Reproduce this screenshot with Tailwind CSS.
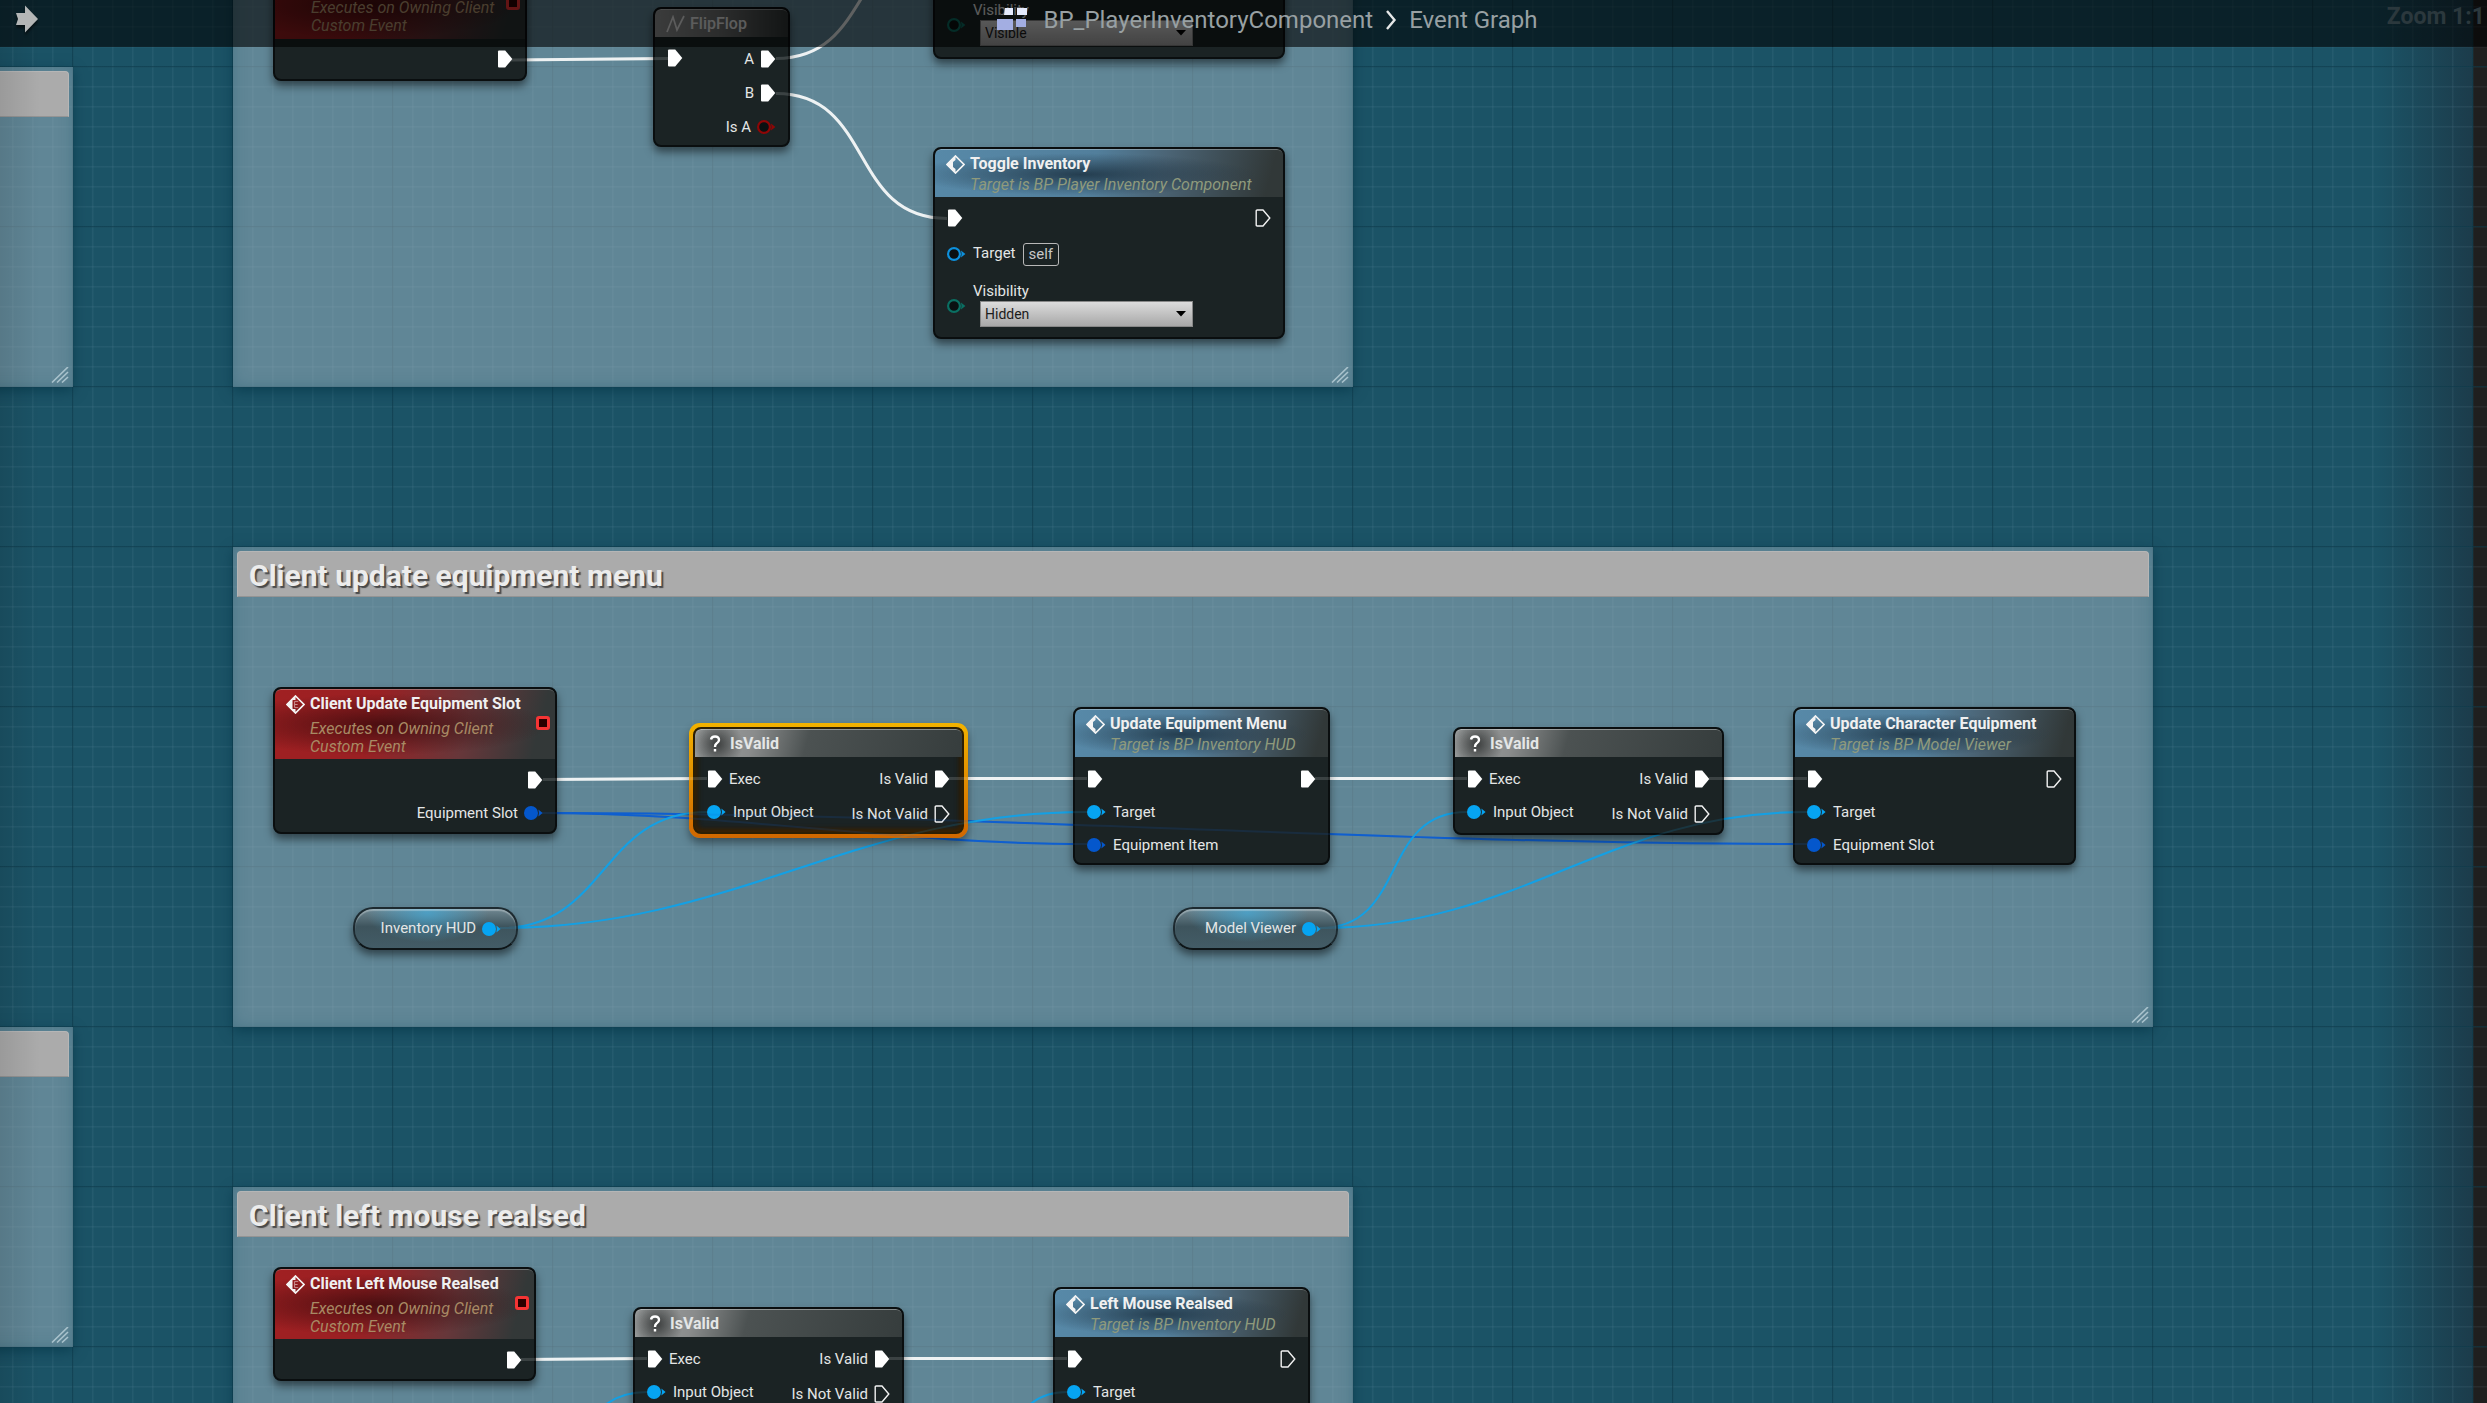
<!DOCTYPE html>
<html lang="en">
<head>
<meta charset="utf-8">
<title>BP_PlayerInventoryComponent - Event Graph</title>
<script src="https://cdn.jsdelivr.net/npm/@tailwindcss/browser@4"></script>
</head>
<body class="bg-[#1b5366] font-['Roboto',sans-serif] text-[15px] text-[#e4e6e6]">

<!-- shared glyphs -->
<svg class="hidden" aria-hidden="true">
  <defs>
    <symbol id="exec-on" viewBox="0 0 16 18"><path d="M1 1.5Q1 .5 2 .5H8.2L15.3 9 8.2 17.5H2Q1 17.5 1 16.5Z" fill="#fff"/></symbol>
    <symbol id="exec-off" viewBox="0 0 16 18"><path d="M1.2 2Q1.2 1 2.2 1H8L14.8 9 8 17H2.2Q1.2 17 1.2 16Z" fill="none" stroke="#f2f2f2" stroke-width="1.4"/></symbol>
    <symbol id="pin-on" viewBox="0 0 19 14"><circle cx="7" cy="7" r="7" fill="currentColor"/><path d="M14.4 3.4 18.6 7 14.4 10.6Q15.4 7 14.4 3.4Z" fill="currentColor"/></symbol>
    <symbol id="pin-off" viewBox="0 0 19 14"><circle cx="7" cy="7" r="5.9" fill="#0a1011" stroke="currentColor" stroke-width="2.2"/><path d="M14 3.4 18.4 7 14 10.6Q15 7 14 3.4Z" fill="currentColor"/></symbol>
    <symbol id="diamond" viewBox="0 0 19 19"><path d="M9.5 1 18 9.5 9.5 18 1 9.5Z" fill="none" stroke="#f4f4f4" stroke-width="1.7"/><path d="M9.5 1V5L7 7V12L9.5 14V18L1 9.5Z" fill="#f4f4f4"/></symbol>
    <symbol id="diamond-event" viewBox="0 0 19 19"><path d="M9.5 1 18 9.5 9.5 18 1 9.5Z" fill="none" stroke="#f4f4f4" stroke-width="1.7"/><path d="M9.5 1V5H6.5V14H9.5V18L1 9.5Z" fill="#f4f4f4"/><path d="M12.2 6.4H8.6V12.6H12.2M8.6 9.5H11.6" fill="none" stroke="#c98f8f" stroke-width="1"/></symbol>
    <symbol id="grip" viewBox="0 0 18 16"><path d="M1 15.5 17 0M6 15.5 17 5M11 15.5 17 10" fill="none" stroke="#a9c2cc" stroke-width="1.6"/></symbol>
    <symbol id="caret" viewBox="0 0 10 6"><path d="M0 0H10L5 5.6Z" fill="#000"/></symbol>
  </defs>
</svg>

<main class="relative min-h-screen w-full overflow-hidden bg-[#1b5366]">
  <!-- canvas edges and grid -->
  <div class="absolute inset-y-0 right-[14px] w-24 bg-linear-to-r from-[#1f3541]/0 to-[#1c3644]/80"></div>
  <div class="absolute inset-y-0 right-0 w-[14px] bg-[#1f1f1f]"></div>
  <div class="absolute inset-0 bg-[linear-gradient(to_right,rgba(150,190,205,.08)_0_1px,rgba(150,190,205,.04)_1px_2px,transparent_2px),linear-gradient(to_bottom,rgba(150,190,205,.08)_0_1px,rgba(150,190,205,.04)_1px_2px,transparent_2px)] bg-[size:20px_20px] bg-[position:12px_6px]"></div>
  <div class="absolute inset-0 bg-[linear-gradient(to_right,rgba(5,50,66,.55)_0_1px,rgba(5,50,66,.2)_1px_2px,transparent_2px),linear-gradient(to_bottom,rgba(5,50,66,.55)_0_1px,rgba(5,50,66,.2)_1px_2px,transparent_2px)] bg-[size:160px_160px] bg-[position:72px_66px]"></div>

  <!-- comment boxes -->
  <section class="absolute -left-40 top-[67px] flex h-80 w-[233px] flex-col justify-between bg-[#a5bac5]/50 p-1 shadow-[inset_0_0_14px_rgba(40,95,115,.4),0_4px_12px_rgba(0,50,68,.6)]">
    <div class="h-[46px] rounded-t-sm border border-[#b6b6b6] border-b-[#949494] bg-[#ababab]"></div>
    <svg class="h-4 w-[18px] self-end" aria-hidden="true"><use href="#grip"/></svg>
  </section>
  <section class="absolute -left-40 top-[1027px] flex h-80 w-[233px] flex-col justify-between bg-[#a5bac5]/50 p-1 shadow-[inset_0_0_14px_rgba(40,95,115,.4),0_4px_12px_rgba(0,50,68,.6)]">
    <div class="h-[46px] rounded-t-sm border border-[#b6b6b6] border-b-[#949494] bg-[#ababab]"></div>
    <svg class="h-4 w-[18px] self-end" aria-hidden="true"><use href="#grip"/></svg>
  </section>
  <section class="absolute -top-64 left-[233px] flex h-[643px] w-[1120px] flex-col justify-end bg-[#a5bac5]/50 p-1 shadow-[inset_0_0_14px_rgba(40,95,115,.4),0_4px_12px_rgba(0,50,68,.6)]">
    <svg class="h-4 w-[18px] self-end" aria-hidden="true"><use href="#grip"/></svg>
  </section>
  <section class="absolute left-[233px] top-[547px] flex h-[480px] w-[1920px] flex-col justify-between bg-[#a5bac5]/50 p-1 shadow-[inset_0_0_14px_rgba(40,95,115,.4),0_4px_12px_rgba(0,50,68,.6)]">
    <h2 class="h-[46px] rounded-t-sm border border-[#b6b6b6] border-b-[#949494] bg-[#ababab] px-[11px] text-3xl leading-[48px] font-bold text-[#ececec] [text-shadow:2px_2px_1px_rgba(40,40,40,.75)]">Client update equipment menu</h2>
    <svg class="h-4 w-[18px] self-end" aria-hidden="true"><use href="#grip"/></svg>
  </section>
  <section class="absolute left-[233px] top-[1187px] flex h-[480px] w-[1120px] flex-col justify-between bg-[#a5bac5]/50 p-1 shadow-[inset_0_0_14px_rgba(40,95,115,.4),0_4px_12px_rgba(0,50,68,.6)]">
    <h2 class="h-[46px] rounded-t-sm border border-[#b6b6b6] border-b-[#949494] bg-[#ababab] px-[11px] text-3xl leading-[48px] font-bold text-[#ececec] [text-shadow:2px_2px_1px_rgba(40,40,40,.75)]">Client left mouse realsed</h2>
    <svg class="h-4 w-[18px] self-end" aria-hidden="true"><use href="#grip"/></svg>
  </section>
  <div class="absolute inset-y-0 left-0 w-10 bg-linear-to-r from-black/10 to-transparent"></div>

  <!-- wires -->
  <svg class="absolute inset-0 h-full w-full" fill="none" aria-hidden="true">
    <g id="wires">
      <g stroke="#0f5fcf" stroke-width="2">
        <path d="M542 813C734 813 895 844 1087 844"/>
        <path d="M542 813C974 813 1375 844 1807 844"/>
      </g>
      <g stroke="#14a0e4" stroke-width="2">
        <path d="M500 928C608 928 599 812 707 812"/>
        <path d="M500 928C734 928 853 812 1087 812"/>
        <path d="M1320 928C1408 928 1379 812 1467 812"/>
        <path d="M1320 928C1521 928 1606 812 1807 812"/>
        <path d="M500 1508C588 1508 559 1392 647 1392"/>
        <path d="M940 1508C1021 1508 986 1392 1067 1392"/>
      </g>
      <g stroke="#eef2f3" stroke-width="3">
        <path d="M511 60L668 58.500"/>
        <path d="M776 58.500C873 58.500 850 -62 947 -62"/>
        <path d="M776 93.500C875 93.500 848 218.500 947 218.500"/>
        <path d="M543 779.500L707 778.500"/>
        <path d="M949 778.500H1087M1315 778.500H1467M1709 778.500H1807"/>
        <path d="M521 1359.500L647 1358.500M889 1358.500H1067"/>
      </g>
    </g>
  </svg>

  <!-- ===== toggle inventory graph ===== -->
  <article class="absolute -top-[33px] left-[273px] h-[114px] w-[254px] overflow-hidden rounded-lg border-2 border-[#0a0e0f] bg-[#1b2324] shadow-[0_5px_8px_rgba(0,0,0,.5)]">
    <header class="relative h-[70px] bg-[radial-gradient(ellipse_60%_50%_at_38%_50%,rgba(50,8,10,.75),transparent),linear-gradient(105deg,#9c1c1e_0%,#8c1c1f_35%,#5a2d30_65%,#2b3333_92%)] pl-9 pt-[30px] text-base text-[#b89a74] italic leading-[18px]">
      <p>Executes on Owning Client<br>Custom Event</p>
      <i class="absolute right-[5px] top-[27px] h-[14px] w-[14px] rounded-[3px] border-3 border-[#f53434] bg-[#2a0000]"></i>
    </header>
    <div class="flex justify-end px-3 pt-[11px]"><svg class="h-[18px] w-4"><use href="#exec-on"/></svg></div>
  </article>

  <article class="absolute left-[653px] top-[7px] h-[140px] w-[137px] overflow-hidden rounded-lg border-2 border-[#0a0e0f] bg-[#1b2324] shadow-[0_5px_8px_rgba(0,0,0,.5)]">
    <header class="flex h-7 items-center gap-1 rounded-t-md border-t border-white/40 bg-linear-to-r from-[#949696] via-[#6c6e6e] to-[#303636] pl-[11px] text-base font-medium text-[#e6e6e6]">
      <svg class="h-[18px] w-5" viewBox="0 0 20 18" fill="none" stroke="#e6e6e6" stroke-width="1.700"><path d="M1 17 7 2 11 15 18 1"/></svg>
      <h3>FlipFlop</h3>
    </header>
    <div class="flex items-start justify-between px-3 pt-3">
      <svg class="h-[18px] w-4"><use href="#exec-on"/></svg>
      <ul class="flex flex-col gap-[14px] leading-5">
        <li class="flex items-center justify-end gap-1.5">A<svg class="h-[18px] w-4"><use href="#exec-on"/></svg></li>
        <li class="flex items-center justify-end gap-1.5">B<svg class="h-[18px] w-4"><use href="#exec-on"/></svg></li>
        <li class="flex items-center justify-end gap-1.5">Is A<svg class="h-[14px] w-[19px] text-[#8e0606]"><use href="#pin-off"/></svg></li>
      </ul>
    </div>
  </article>

  <article class="absolute -top-[133px] left-[933px] h-[192px] w-[352px] overflow-hidden rounded-lg border-2 border-[#0a0e0f] bg-[#1b2324] shadow-[0_5px_8px_rgba(0,0,0,.5)]">
    <div class="flex items-start gap-[7px] pl-3 pt-[131px]">
      <svg class="mt-[18px] h-[14px] w-[19px] text-[#0a6f62]"><use href="#pin-off"/></svg>
      <div class="flex flex-col leading-5">
        <label for="vis-a">Visibility</label>
        <span class="relative ml-[7px] flex">
          <select id="vis-a" class="h-[26px] w-[213px] appearance-none border border-[#888] bg-linear-to-b from-[#dcdcdc] to-[#a8a8a8] pl-1 text-sm text-[#1c1c1c]"><option>Visible</option><option>Hidden</option></select>
          <svg class="absolute right-[7px] top-[10px] h-[6px] w-[10px]"><use href="#caret"/></svg>
        </span>
      </div>
    </div>
  </article>

  <article class="absolute left-[933px] top-[147px] h-[192px] w-[352px] overflow-hidden rounded-lg border-2 border-[#0a0e0f] bg-[#1b2324] shadow-[0_5px_8px_rgba(0,0,0,.5)]">
    <header class="h-12 rounded-t-md border-t border-white/30 bg-[radial-gradient(ellipse_50%_45%_at_42%_52%,rgba(25,45,60,.8),transparent),linear-gradient(105deg,#5789a8_0%,#527f9c_45%,#4b6475_65%,#313838_95%)] pl-[11px] pt-[3px] text-base">
      <h3 class="flex items-center gap-[5px] font-bold leading-[22px] text-[#f0f0f0]"><svg class="h-[19px] w-[19px]"><use href="#diamond"/></svg>Toggle Inventory</h3>
      <p class="pl-6 leading-5 text-[#8f9a7c] italic">Target is BP Player Inventory Component</p>
    </header>
    <div class="flex justify-between px-3 pt-3"><svg class="h-[18px] w-4"><use href="#exec-on"/></svg><svg class="h-[18px] w-4"><use href="#exec-off"/></svg></div>
    <p class="flex items-center gap-[7px] pl-3 pt-[14px] leading-6"><svg class="h-[14px] w-[19px] text-[#0d90dc]"><use href="#pin-off"/></svg><span class="pb-0.5">Target</span><span class="h-[23px] rounded-[3px] border border-[#b8b8b8] px-[5px] leading-5 text-[#c8c8c8]">self</span></p>
    <div class="flex items-start gap-[7px] pl-3 pt-[14px]">
      <svg class="mt-[18px] h-[14px] w-[19px] text-[#0a6f62]"><use href="#pin-off"/></svg>
      <div class="flex flex-col leading-5">
        <label for="vis-b">Visibility</label>
        <span class="relative ml-[7px] flex">
          <select id="vis-b" class="h-[26px] w-[213px] appearance-none border border-[#888] bg-linear-to-b from-[#dcdcdc] to-[#a8a8a8] pl-1 text-sm text-[#1c1c1c]"><option>Hidden</option><option>Visible</option></select>
          <svg class="absolute right-[7px] top-[10px] h-[6px] w-[10px]"><use href="#caret"/></svg>
        </span>
      </div>
    </div>
  </article>

  <!-- ===== client update equipment menu ===== -->
  <article class="absolute left-[273px] top-[687px] h-[147px] w-[284px] overflow-hidden rounded-lg border-2 border-[#0a0e0f] bg-[#1b2324] shadow-[0_5px_8px_rgba(0,0,0,.5)]">
    <header class="relative h-[70px] rounded-t-md border-t border-white/30 bg-[radial-gradient(ellipse_60%_45%_at_38%_50%,rgba(50,8,10,.75),transparent),linear-gradient(105deg,#a02022_0%,#9a2023_35%,#66373a_68%,#333838_92%)] pl-[11px] pt-[3px] text-base">
      <h3 class="flex items-center gap-[5px] font-bold leading-[22px] text-[#f0f0f0]"><svg class="h-[19px] w-[19px]"><use href="#diamond-event"/></svg>Client Update Equipment Slot</h3>
      <p class="mt-[5px] pl-6 leading-[18px] text-[#a88a64] italic">Executes on Owning Client<br>Custom Event</p>
      <i class="absolute right-[5px] top-[26px] h-[14px] w-[14px] rounded-[3px] border-3 border-[#f53434] bg-[#2a0000]"></i>
    </header>
    <ul class="flex flex-col gap-[13px] px-3 pt-[11px] leading-5">
      <li class="flex h-5 items-center justify-end"><svg class="h-[18px] w-4"><use href="#exec-on"/></svg></li>
      <li class="flex items-center justify-end gap-1.5">Equipment Slot<svg class="h-[14px] w-[19px] text-[#0457cc]"><use href="#pin-on"/></svg></li>
    </ul>
  </article>

  <div class="absolute left-[689px] top-[723px] rounded-[11px] bg-linear-to-b from-[#f2b200] to-[#d06700] p-1 shadow-[0_5px_8px_rgba(0,0,0,.4)]">
    <article class="h-[107px] w-[271px] overflow-hidden rounded-lg border-2 border-[#2c1f04] bg-[#1b2324] shadow-[inset_0_-3px_5px_#3a2204,inset_3px_0_5px_#2a1c06,inset_-3px_0_5px_#2a1c06]">
      <header class="flex h-7 items-center gap-[9px] rounded-t-md border-t border-white/40 bg-[radial-gradient(circle_at_22px_14px,#3a3d3d_0,transparent_26px),linear-gradient(105deg,#a0a3a3_0%,#8a8c8c_22%,#4c5252_42%,#363d3d_100%)] pl-[14px] text-base font-bold">
        <svg class="h-[17px] w-3" viewBox="0 0 12 17" fill="none" stroke="#fff" stroke-width="2.400"><path d="M2 4.500Q2.500 1.500 6 1.500 10 1.500 10 5 10 7 7.500 8.500 6 9.500 6 12M6 14V16.500"/></svg>
        <h3>IsValid</h3>
      </header>
      <div class="flex justify-between px-3 pt-[10px] leading-6">
        <ul class="flex flex-col gap-[9px]">
          <li class="flex items-center gap-1.5"><svg class="h-[18px] w-4"><use href="#exec-on"/></svg>Exec</li>
          <li class="flex items-center gap-[7px]"><svg class="h-[14px] w-[19px] text-[#06a4f2]"><use href="#pin-on"/></svg>Input Object</li>
        </ul>
        <ul class="flex flex-col gap-[11px]">
          <li class="flex items-center justify-end gap-1.5">Is Valid<svg class="h-[18px] w-4"><use href="#exec-on"/></svg></li>
          <li class="flex items-center justify-end gap-1.5">Is Not Valid<svg class="h-[18px] w-4"><use href="#exec-off"/></svg></li>
        </ul>
      </div>
    </article>
  </div>

  <article class="absolute left-[1073px] top-[707px] h-[158px] w-[257px] overflow-hidden rounded-lg border-2 border-[#0a0e0f] bg-[#1b2324] shadow-[0_5px_8px_rgba(0,0,0,.5)]">
    <header class="h-12 rounded-t-md border-t border-white/30 bg-[radial-gradient(ellipse_50%_45%_at_42%_52%,rgba(25,45,60,.8),transparent),linear-gradient(105deg,#5789a8_0%,#527f9c_45%,#4b6475_65%,#313838_95%)] pl-[11px] pt-[3px] text-base">
      <h3 class="flex items-center gap-[5px] font-bold leading-[22px] text-[#f0f0f0]"><svg class="h-[19px] w-[19px]"><use href="#diamond"/></svg>Update Equipment Menu</h3>
      <p class="pl-6 leading-5 text-[#8f9a7c] italic">Target is BP Inventory HUD</p>
    </header>
    <ul class="flex flex-col gap-[9px] px-3 pt-[10px] leading-6">
      <li class="flex h-6 items-center justify-between"><svg class="h-[18px] w-4"><use href="#exec-on"/></svg><svg class="h-[18px] w-4"><use href="#exec-on"/></svg></li>
      <li class="flex items-center gap-[7px]"><svg class="h-[14px] w-[19px] text-[#06a4f2]"><use href="#pin-on"/></svg>Target</li>
      <li class="flex items-center gap-[7px]"><svg class="h-[14px] w-[19px] text-[#0457cc]"><use href="#pin-on"/></svg>Equipment Item</li>
    </ul>
  </article>

  <article class="absolute left-[1453px] top-[727px] h-[108px] w-[271px] overflow-hidden rounded-lg border-2 border-[#0a0e0f] bg-[#1b2324] shadow-[0_5px_8px_rgba(0,0,0,.5)]">
    <header class="flex h-7 items-center gap-[9px] rounded-t-md border-t border-white/40 bg-[radial-gradient(circle_at_22px_14px,#3a3d3d_0,transparent_26px),linear-gradient(105deg,#a0a3a3_0%,#8a8c8c_22%,#4c5252_42%,#363d3d_100%)] pl-[14px] text-base font-bold">
      <svg class="h-[17px] w-3" viewBox="0 0 12 17" fill="none" stroke="#fff" stroke-width="2.400"><path d="M2 4.500Q2.500 1.500 6 1.500 10 1.500 10 5 10 7 7.500 8.500 6 9.500 6 12M6 14V16.500"/></svg>
      <h3>IsValid</h3>
    </header>
    <div class="flex justify-between px-3 pt-[10px] leading-6">
      <ul class="flex flex-col gap-[9px]">
        <li class="flex items-center gap-1.5"><svg class="h-[18px] w-4"><use href="#exec-on"/></svg>Exec</li>
        <li class="flex items-center gap-[7px]"><svg class="h-[14px] w-[19px] text-[#06a4f2]"><use href="#pin-on"/></svg>Input Object</li>
      </ul>
      <ul class="flex flex-col gap-[11px]">
        <li class="flex items-center justify-end gap-1.5">Is Valid<svg class="h-[18px] w-4"><use href="#exec-on"/></svg></li>
        <li class="flex items-center justify-end gap-1.5">Is Not Valid<svg class="h-[18px] w-4"><use href="#exec-off"/></svg></li>
      </ul>
    </div>
  </article>

  <article class="absolute left-[1793px] top-[707px] h-[158px] w-[283px] overflow-hidden rounded-lg border-2 border-[#0a0e0f] bg-[#1b2324] shadow-[0_5px_8px_rgba(0,0,0,.5)]">
    <header class="h-12 rounded-t-md border-t border-white/30 bg-[radial-gradient(ellipse_50%_45%_at_42%_52%,rgba(25,45,60,.8),transparent),linear-gradient(105deg,#5789a8_0%,#527f9c_45%,#4b6475_65%,#313838_95%)] pl-[11px] pt-[3px] text-base">
      <h3 class="flex items-center gap-[5px] font-bold leading-[22px] text-[#f0f0f0]"><svg class="h-[19px] w-[19px]"><use href="#diamond"/></svg>Update Character Equipment</h3>
      <p class="pl-6 leading-5 text-[#8f9a7c] italic">Target is BP Model Viewer</p>
    </header>
    <ul class="flex flex-col gap-[9px] px-3 pt-[10px] leading-6">
      <li class="flex h-6 items-center justify-between"><svg class="h-[18px] w-4"><use href="#exec-on"/></svg><svg class="h-[18px] w-4"><use href="#exec-off"/></svg></li>
      <li class="flex items-center gap-[7px]"><svg class="h-[14px] w-[19px] text-[#06a4f2]"><use href="#pin-on"/></svg>Target</li>
      <li class="flex items-center gap-[7px]"><svg class="h-[14px] w-[19px] text-[#0457cc]"><use href="#pin-on"/></svg>Equipment Slot</li>
    </ul>
  </article>

  <article class="absolute left-[353px] top-[907px] flex h-[43px] w-[165px] items-center justify-end gap-1.5 rounded-[20px] border-2 border-[#1d2a30] border-b-[#0e1517] bg-[radial-gradient(ellipse_38%_75%_at_45%_10%,rgba(70,170,215,.75),transparent),linear-gradient(#6f8791,#3e545d_45%,#435c66)] pr-[15px] shadow-[inset_0_2px_1px_rgba(255,255,255,.3),0_5px_8px_rgba(0,0,0,.5)]">Inventory HUD<svg class="h-[14px] w-[19px] text-[#06a4f2]"><use href="#pin-on"/></svg></article>
  <article class="absolute left-[1173px] top-[907px] flex h-[43px] w-[165px] items-center justify-end gap-1.5 rounded-[20px] border-2 border-[#1d2a30] border-b-[#0e1517] bg-[radial-gradient(ellipse_38%_75%_at_45%_10%,rgba(70,170,215,.75),transparent),linear-gradient(#6f8791,#3e545d_45%,#435c66)] pr-[15px] shadow-[inset_0_2px_1px_rgba(255,255,255,.3),0_5px_8px_rgba(0,0,0,.5)]">Model Viewer<svg class="h-[14px] w-[19px] text-[#06a4f2]"><use href="#pin-on"/></svg></article>

  <!-- ===== client left mouse ===== -->
  <article class="absolute left-[273px] top-[1267px] h-[114px] w-[263px] overflow-hidden rounded-lg border-2 border-[#0a0e0f] bg-[#1b2324] shadow-[0_5px_8px_rgba(0,0,0,.5)]">
    <header class="relative h-[70px] rounded-t-md border-t border-white/30 bg-[radial-gradient(ellipse_60%_45%_at_38%_50%,rgba(50,8,10,.75),transparent),linear-gradient(105deg,#a02022_0%,#9a2023_35%,#66373a_68%,#333838_92%)] pl-[11px] pt-[3px] text-base">
      <h3 class="flex items-center gap-[5px] font-bold leading-[22px] text-[#f0f0f0]"><svg class="h-[19px] w-[19px]"><use href="#diamond-event"/></svg>Client Left Mouse Realsed</h3>
      <p class="mt-[5px] pl-6 leading-[18px] text-[#a88a64] italic">Executes on Owning Client<br>Custom Event</p>
      <i class="absolute right-[5px] top-[26px] h-[14px] w-[14px] rounded-[3px] border-3 border-[#f53434] bg-[#2a0000]"></i>
    </header>
    <div class="flex justify-end px-3 pt-3"><svg class="h-[18px] w-4"><use href="#exec-on"/></svg></div>
  </article>

  <article class="absolute left-[633px] top-[1307px] h-[108px] w-[271px] overflow-hidden rounded-lg border-2 border-[#0a0e0f] bg-[#1b2324] shadow-[0_5px_8px_rgba(0,0,0,.5)]">
    <header class="flex h-7 items-center gap-[9px] rounded-t-md border-t border-white/40 bg-[radial-gradient(circle_at_22px_14px,#3a3d3d_0,transparent_26px),linear-gradient(105deg,#a0a3a3_0%,#8a8c8c_22%,#4c5252_42%,#363d3d_100%)] pl-[14px] text-base font-bold">
      <svg class="h-[17px] w-3" viewBox="0 0 12 17" fill="none" stroke="#fff" stroke-width="2.400"><path d="M2 4.500Q2.500 1.500 6 1.500 10 1.500 10 5 10 7 7.500 8.500 6 9.500 6 12M6 14V16.500"/></svg>
      <h3>IsValid</h3>
    </header>
    <div class="flex justify-between px-3 pt-[10px] leading-6">
      <ul class="flex flex-col gap-[9px]">
        <li class="flex items-center gap-1.5"><svg class="h-[18px] w-4"><use href="#exec-on"/></svg>Exec</li>
        <li class="flex items-center gap-[7px]"><svg class="h-[14px] w-[19px] text-[#06a4f2]"><use href="#pin-on"/></svg>Input Object</li>
      </ul>
      <ul class="flex flex-col gap-[11px]">
        <li class="flex items-center justify-end gap-1.5">Is Valid<svg class="h-[18px] w-4"><use href="#exec-on"/></svg></li>
        <li class="flex items-center justify-end gap-1.5">Is Not Valid<svg class="h-[18px] w-4"><use href="#exec-off"/></svg></li>
      </ul>
    </div>
  </article>

  <article class="absolute left-[1053px] top-[1287px] h-[158px] w-[257px] overflow-hidden rounded-lg border-2 border-[#0a0e0f] bg-[#1b2324] shadow-[0_5px_8px_rgba(0,0,0,.5)]">
    <header class="h-12 rounded-t-md border-t border-white/30 bg-[radial-gradient(ellipse_50%_45%_at_42%_52%,rgba(25,45,60,.8),transparent),linear-gradient(105deg,#5789a8_0%,#527f9c_45%,#4b6475_65%,#313838_95%)] pl-[11px] pt-[3px] text-base">
      <h3 class="flex items-center gap-[5px] font-bold leading-[22px] text-[#f0f0f0]"><svg class="h-[19px] w-[19px]"><use href="#diamond"/></svg>Left Mouse Realsed</h3>
      <p class="pl-6 leading-5 text-[#8f9a7c] italic">Target is BP Inventory HUD</p>
    </header>
    <ul class="flex flex-col gap-[9px] px-3 pt-[10px] leading-6">
      <li class="flex h-6 items-center justify-between"><svg class="h-[18px] w-4"><use href="#exec-on"/></svg><svg class="h-[18px] w-4"><use href="#exec-off"/></svg></li>
      <li class="flex items-center gap-[7px]"><svg class="h-[14px] w-[19px] text-[#06a4f2]"><use href="#pin-on"/></svg>Target</li>
    </ul>
  </article>

  <!-- wires show faintly through node bodies -->
  <svg class="pointer-events-none absolute inset-0 h-full w-full opacity-15" fill="none" aria-hidden="true"><use href="#wires"/></svg>

  <!-- title bar -->
  <nav class="absolute inset-x-0 top-0 flex h-[47px] items-center justify-center bg-black/60 pb-[7px] pl-12 text-2xl text-[#98a0a3]">
    <button type="button" aria-label="Forward" class="absolute left-4 top-[5px]"><svg class="h-7 w-[22px] drop-shadow-[0_3px_1px_rgba(0,0,0,.5)]" viewBox="0 0 22 28"><path d="M0 8H9V.5L22 14 9 27.500V20H0L2 14Z" fill="#b4b6b6"/></svg></button>
    <svg class="h-6 w-[30px]" viewBox="0 0 30 24" aria-hidden="true"><path d="M8 0H16V7H7ZM20 0H30V7H20Z" fill="#e4eafc"/><path d="M0 11H16V22H0ZM19 11H29V19H19Z" fill="#a3aee2"/></svg>
    <a href="#" class="ml-4">BP_PlayerInventoryComponent</a>
    <svg class="mx-3 h-5 w-3" viewBox="0 0 12 20" fill="none" stroke="#e6e8e8" stroke-width="2.400" aria-hidden="true"><path d="M2 1 9.500 10 2 19"/></svg>
    <a href="#">Event Graph</a>
    <span class="absolute right-0.5 top-0 text-[23px] leading-[34px] font-bold text-[#2b383d]">Zoom 1:1</span>
  </nav>
</main>
</body>
</html>
